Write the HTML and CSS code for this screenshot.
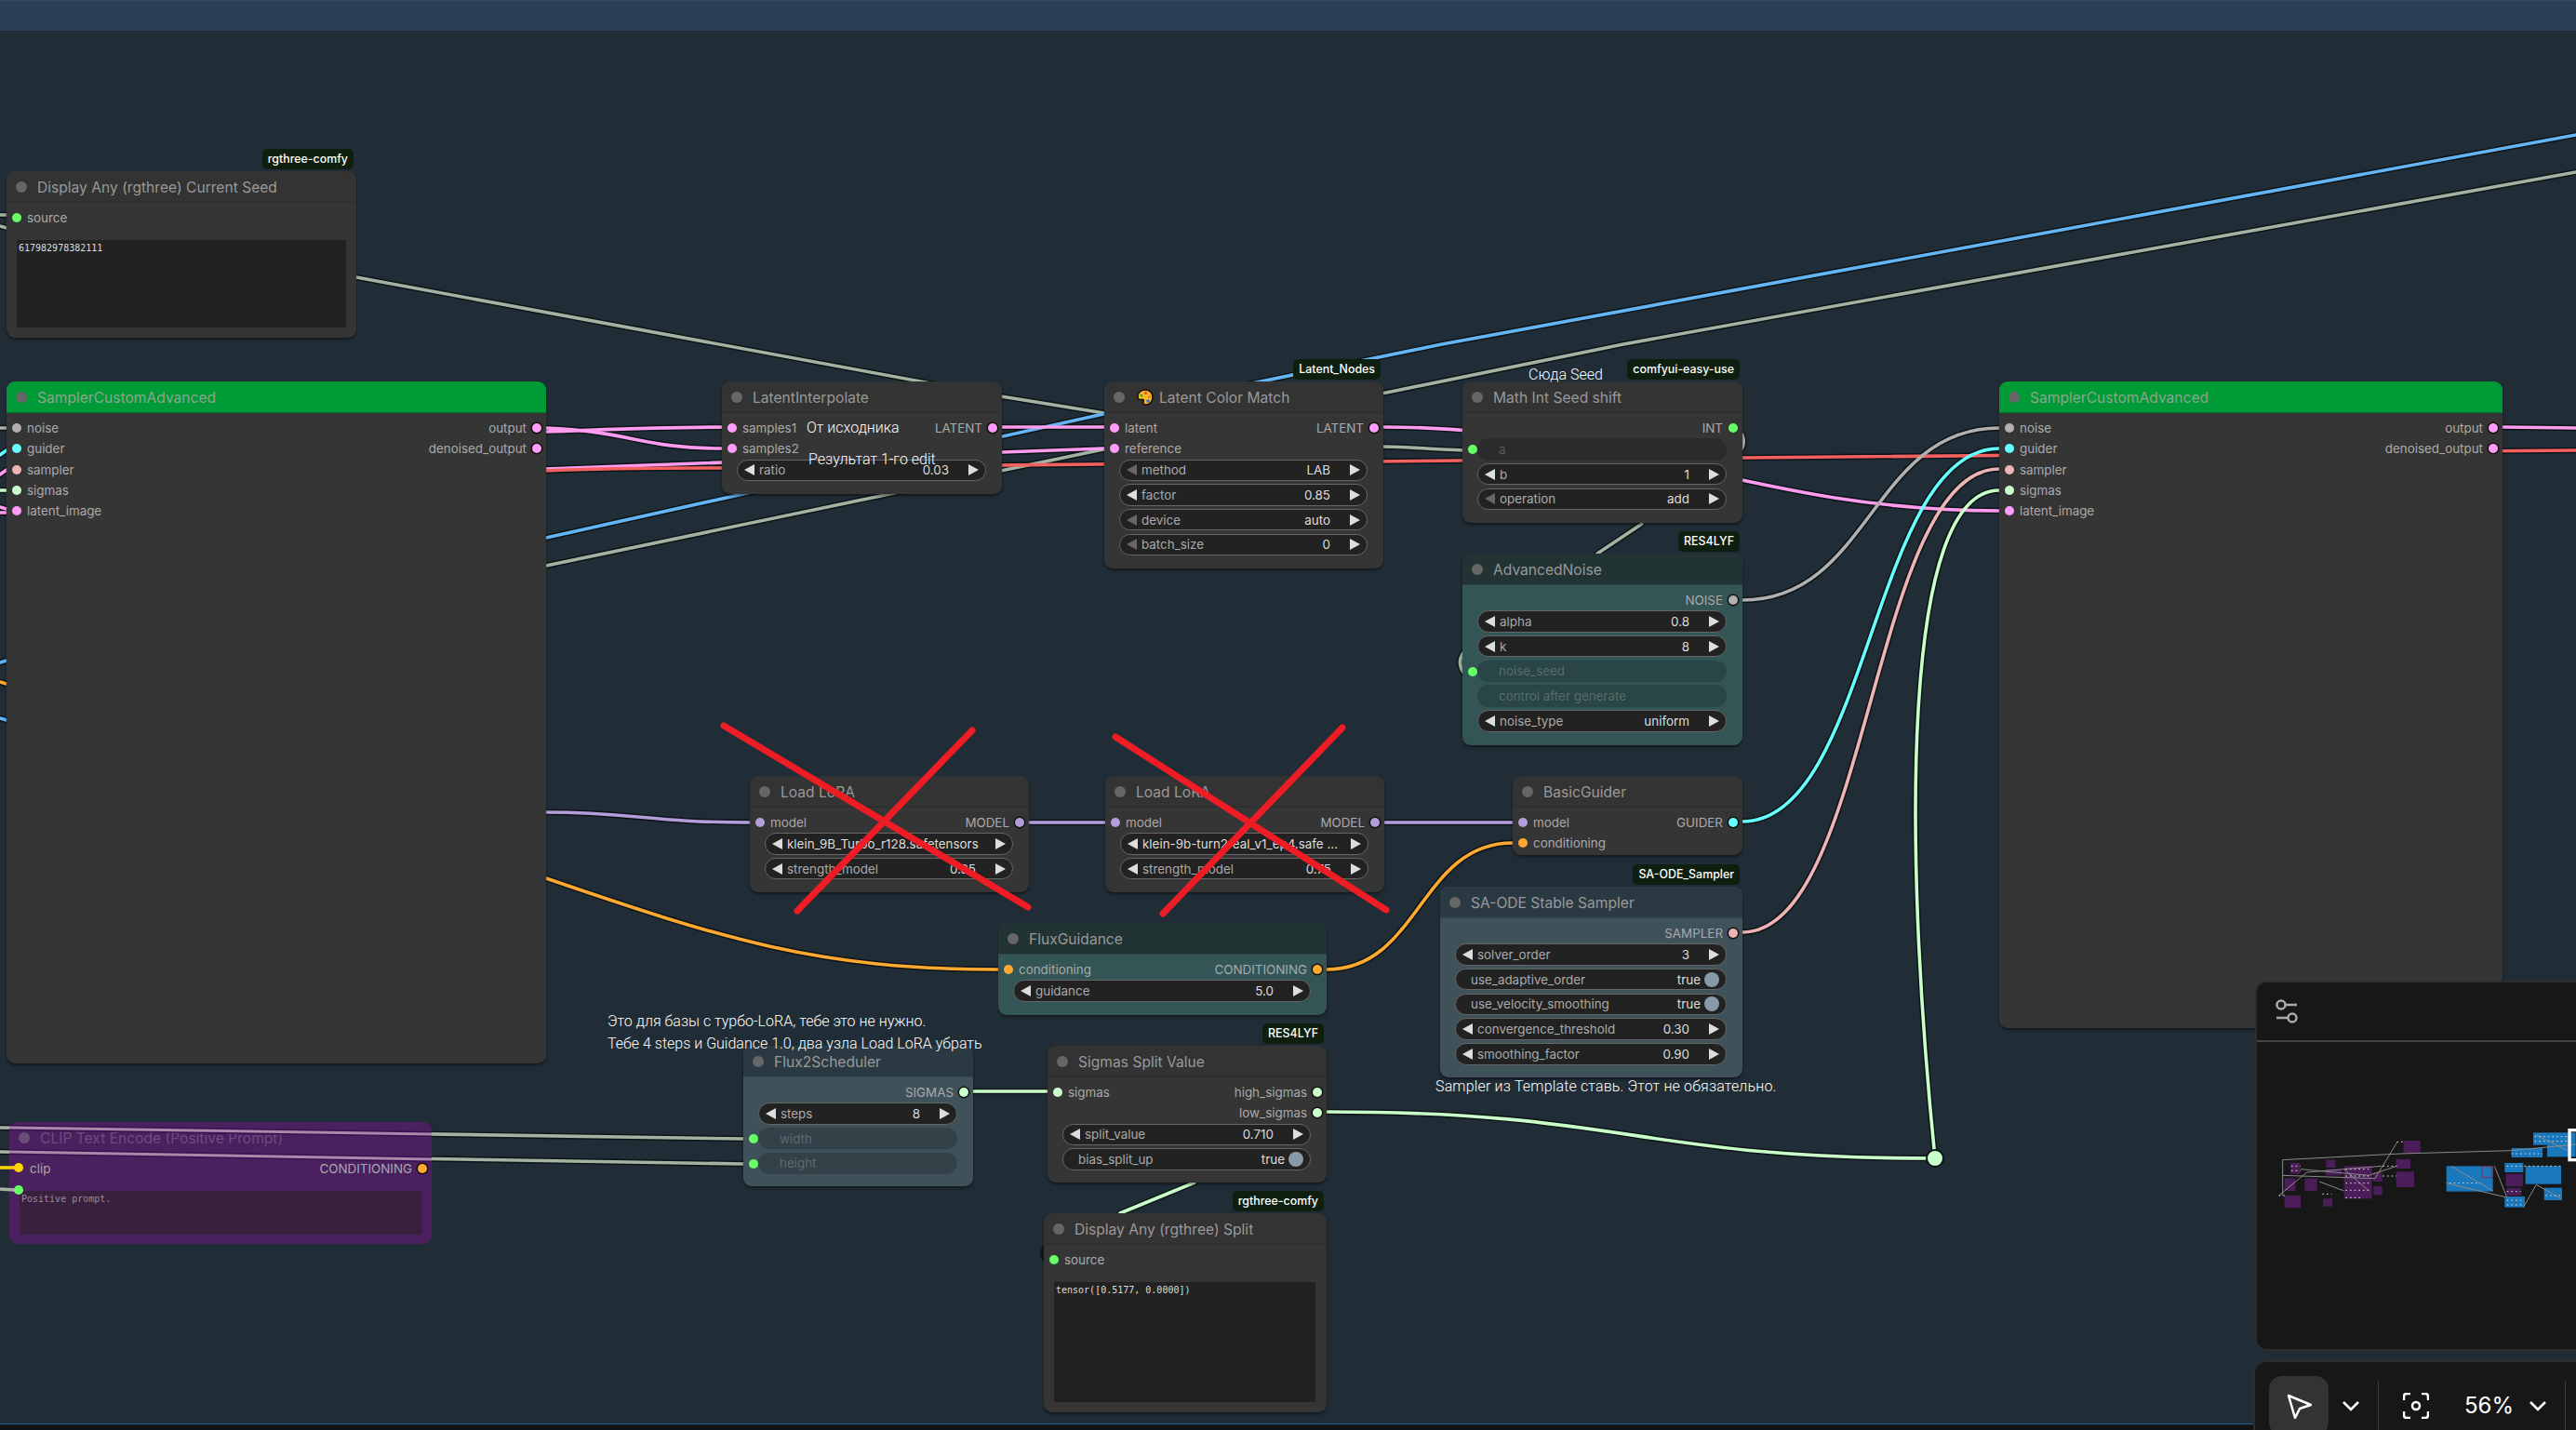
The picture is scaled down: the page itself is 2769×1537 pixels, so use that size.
FILE: index.html
```html
<!DOCTYPE html>
<html>
<head>
  <title>ComfyUI</title>
  <meta charset="UTF-8">
  <link rel="stylesheet" href="styles.css">
</head>
<body>
<div class="canvas">
  <svg class="wires" width="2769" height="1537">
    <defs>
      <g id="links">
        <path class="w-sage" d="M383 298L1076 426L1187 444"/>
        <path class="w-blue" d="M587 578L1186 445L1550 370L2769 145"/>
        <path class="w-sage" d="M587 608L1186 483L1500 420L1745 370L2769 185"/>
        <path class="w-pink" d="M587 460C680 464 690 482 776 482"/>
        <path class="w-pink" d="M587 464C650 462 700 459 787 459"/>
        <path class="w-pink" d="M587 504L1187 482"/>
        <path class="w-red" d="M587 506C650 503 700 503 776 503L1572 495L1873 492L2769 484"/>
        <path class="w-pink" d="M1076 459L1187 459"/>
        <path class="w-pink" d="M1487 459C1750 459 1886 549 2149 549"/>
        <path class="w-sage" d="M1487 480C1530 481 1550 484 1584 484"/>
        <path class="w-sage" d="M1765 563L1717 595"/>
        <path class="w-sage" d="M1868 462C1876 468 1876 478 1870 486"/>
        <path class="w-sage" d="M1574 700C1568 708 1568 716 1574 724"/>
        <path class="w-grey" d="M1873 645C2010 645 2012 460 2149 460"/>
        <path class="w-cyan" d="M1873 883C2010 883 2012 482 2149 482"/>
        <path class="w-rose" d="M1873 1002C2010 1002 2012 504 2149 504"/>
        <path class="w-mint" d="M2080 1245C2045 900 2045 527 2149 527"/>
        <path class="w-mint" d="M1426 1195C1750 1195 1760 1245 2080 1245"/>
        <path class="w-mint" d="M1046 1173L1126 1173"/>
        <path class="w-mint" d="M1284 1271L1204 1304"/>
        <path class="w-lilac" d="M587 873C680 873 700 884 806 884"/>
        <path class="w-lilac" d="M1106 884L1188 884"/>
        <path class="w-lilac" d="M1488 884L1626 884"/>
        <path class="w-orange" d="M587 944C780 1010 880 1042 1073 1042"/>
        <path class="w-orange" d="M1426 1042C1526 1042 1526 906 1626 906"/>
        <path class="w-sage" d="M0 1212L799 1224"/>
        <path class="w-sage" d="M0 1238L799 1251"/>
        <path class="w-pink" d="M2690 459L2769 460"/>
        <path class="w-sage" d="M0 231L7 231"/>
        <path class="w-sage" d="M0 243L7 245"/>
        <path class="w-grey" d="M0 460L7 460"/>
        <path class="w-cyan" d="M0 489L7 484"/>
        <path class="w-pink" d="M0 510L7 505"/>
        <path class="w-mint" d="M0 527L7 527"/>
        <path class="w-pink" d="M0 545L7 547"/>
        <path class="w-pink" d="M0 551L7 551"/>
        <path class="w-blue" d="M0 712L7 710"/>
        <path class="w-orange" d="M0 733L7 735"/>
        <path class="w-blue" d="M0 772L7 774"/>
      </g>
    </defs>
    <use href="#links" class="halo"/>
    <use href="#links" class="lines"/>
    <path class="curl" d="M1122 1340C1119 1345 1119 1350 1122 1354"/>
    <circle class="reroute" cx="2080" cy="1245" r="9"/>
  </svg>

  <div class="node n-seed">
    <div class="badge">rgthree-comfy</div>
    <div class="title"><span class="mode"></span>Display Any (rgthree) Current Seed</div>
    <div class="body">
      <div class="row"><span class="slot s-green"></span>source</div>
      <div class="text-box">617982978382111</div>
    </div>
  </div>

  <div class="node green n-sampler-a">
    <div class="title"><span class="mode"></span>SamplerCustomAdvanced</div>
    <div class="body">
      <div class="row"><span class="slot s-grey"></span>noise<span class="out">output<span class="slot s-pink linked"></span></span></div>
      <div class="row"><span class="slot s-cyan"></span>guider<span class="out">denoised_output<span class="slot s-pink linked"></span></span></div>
      <div class="row"><span class="slot s-rose"></span>sampler</div>
      <div class="row"><span class="slot s-mint"></span>sigmas</div>
      <div class="row"><span class="slot s-pink"></span>latent_image</div>
    </div>
  </div>

  <div class="node n-interp">
    <div class="title"><span class="mode"></span>LatentInterpolate</div>
    <div class="body">
      <div class="row"><span class="slot s-pink"></span>samples1<span class="out">LATENT<span class="slot s-pink linked"></span></span></div>
      <div class="row"><span class="slot s-pink"></span>samples2</div>
      <div class="widget"><i class="arrow left"></i><span class="label">ratio</span><span class="value">0.03</span><i class="arrow right"></i></div>
    </div>
  </div>

  <div class="node n-match">
    <div class="badge">Latent_Nodes</div>
    <div class="title"><span class="mode"></span>
      <svg class="palette" width="18" height="18" viewBox="0 0 18 18"><path d="M9 1C4 1 1 4.500 1 8.500C1 11 3 12 5 11.500C7 11 8 12 7 14C6.500 16 8 17 10 17C14 17 17 13 17 9C17 4.500 14 1 9 1Z" fill="#fbb81f" stroke="#111" stroke-width="1.500"/><circle cx="5" cy="7" r="1.500" fill="#3aa845"/><circle cx="9.500" cy="4.500" r="1.500" fill="#e0402f"/><circle cx="13.500" cy="8.500" r="1.500" fill="#e8742a"/><circle cx="12" cy="13" r="1.800" fill="#2a6fe0"/></svg>
      Latent Color Match</div>
    <div class="body">
      <div class="row"><span class="slot s-pink"></span>latent<span class="out">LATENT<span class="slot s-pink linked"></span></span></div>
      <div class="row"><span class="slot s-pink"></span>reference</div>
      <div class="widget"><i class="arrow left dim"></i><span class="label">method</span><span class="value">LAB</span><i class="arrow right"></i></div>
      <div class="widget"><i class="arrow left"></i><span class="label">factor</span><span class="value">0.85</span><i class="arrow right"></i></div>
      <div class="widget"><i class="arrow left dim"></i><span class="label">device</span><span class="value">auto</span><i class="arrow right"></i></div>
      <div class="widget"><i class="arrow left dim"></i><span class="label">batch_size</span><span class="value">0</span><i class="arrow right"></i></div>
    </div>
  </div>

  <div class="node n-math">
    <div class="badge">comfyui-easy-use</div>
    <div class="title"><span class="mode"></span>Math Int Seed shift</div>
    <div class="body">
      <div class="row"><span class="out">INT<span class="slot s-green"></span></span></div>
      <div class="widget off"><span class="slot s-green"></span><span class="label">a</span></div>
      <div class="widget"><i class="arrow left"></i><span class="label">b</span><span class="value">1</span><i class="arrow right"></i></div>
      <div class="widget"><i class="arrow left dim"></i><span class="label">operation</span><span class="value">add</span><i class="arrow right"></i></div>
    </div>
  </div>

  <div class="node teal n-noise">
    <div class="badge">RES4LYF</div>
    <div class="title"><span class="mode"></span>AdvancedNoise</div>
    <div class="body">
      <div class="row"><span class="out">NOISE<span class="slot s-grey linked"></span></span></div>
      <div class="widget"><i class="arrow left"></i><span class="label">alpha</span><span class="value">0.8</span><i class="arrow right"></i></div>
      <div class="widget"><i class="arrow left"></i><span class="label">k</span><span class="value">8</span><i class="arrow right"></i></div>
      <div class="widget off"><span class="slot s-green"></span><span class="label">noise_seed</span></div>
      <div class="widget off"><span class="label">control after generate</span></div>
      <div class="widget"><i class="arrow left"></i><span class="label">noise_type</span><span class="value">uniform</span><i class="arrow right"></i></div>
    </div>
  </div>

  <div class="node green n-sampler-b">
    <div class="title"><span class="mode"></span>SamplerCustomAdvanced</div>
    <div class="body">
      <div class="row"><span class="slot s-grey"></span>noise<span class="out">output<span class="slot s-pink linked"></span></span></div>
      <div class="row"><span class="slot s-cyan"></span>guider<span class="out">denoised_output<span class="slot s-pink linked"></span></span></div>
      <div class="row"><span class="slot s-rose"></span>sampler</div>
      <div class="row"><span class="slot s-mint"></span>sigmas</div>
      <div class="row"><span class="slot s-pink"></span>latent_image</div>
    </div>
  </div>

  <div class="node n-lora-a">
    <div class="title"><span class="mode"></span>Load LoRA</div>
    <div class="body">
      <div class="row"><span class="slot s-lilac"></span>model<span class="out">MODEL<span class="slot s-lilac linked"></span></span></div>
      <div class="widget"><i class="arrow left"></i><span class="label bright">klein_9B_Turbo_r128.safetensors</span><i class="arrow right"></i></div>
      <div class="widget"><i class="arrow left"></i><span class="label">strength_model</span><span class="value">0.85</span><i class="arrow right"></i></div>
    </div>
  </div>

  <div class="node n-lora-b">
    <div class="title"><span class="mode"></span>Load LoRA</div>
    <div class="body">
      <div class="row"><span class="slot s-lilac"></span>model<span class="out">MODEL<span class="slot s-lilac linked"></span></span></div>
      <div class="widget"><i class="arrow left"></i><span class="label bright">klein-9b-turn2real_v1_ep4.safe ...</span><i class="arrow right"></i></div>
      <div class="widget"><i class="arrow left"></i><span class="label">strength_model</span><span class="value">0.75</span><i class="arrow right"></i></div>
    </div>
  </div>

  <div class="node n-guider">
    <div class="title"><span class="mode"></span>BasicGuider</div>
    <div class="body">
      <div class="row"><span class="slot s-lilac"></span>model<span class="out">GUIDER<span class="slot s-cyan linked"></span></span></div>
      <div class="row"><span class="slot s-orange"></span>conditioning</div>
    </div>
  </div>

  <div class="node teal n-flux">
    <div class="title"><span class="mode"></span>FluxGuidance</div>
    <div class="body">
      <div class="row"><span class="slot s-orange"></span>conditioning<span class="out">CONDITIONING<span class="slot s-orange linked"></span></span></div>
      <div class="widget"><i class="arrow left"></i><span class="label">guidance</span><span class="value">5.0</span><i class="arrow right"></i></div>
    </div>
  </div>

  <div class="node slate n-ode">
    <div class="badge">SA-ODE_Sampler</div>
    <div class="title"><span class="mode"></span>SA-ODE Stable Sampler</div>
    <div class="body">
      <div class="row"><span class="out">SAMPLER<span class="slot s-rose linked"></span></span></div>
      <div class="widget"><i class="arrow left"></i><span class="label">solver_order</span><span class="value">3</span><i class="arrow right"></i></div>
      <div class="widget toggle"><span class="label">use_adaptive_order</span><span class="value">true</span><i class="knob"></i></div>
      <div class="widget toggle"><span class="label">use_velocity_smoothing</span><span class="value">true</span><i class="knob"></i></div>
      <div class="widget"><i class="arrow left"></i><span class="label">convergence_threshold</span><span class="value">0.30</span><i class="arrow right"></i></div>
      <div class="widget"><i class="arrow left"></i><span class="label">smoothing_factor</span><span class="value">0.90</span><i class="arrow right"></i></div>
    </div>
  </div>

  <div class="node slate n-sched">
    <div class="title"><span class="mode"></span>Flux2Scheduler</div>
    <div class="body">
      <div class="row"><span class="out">SIGMAS<span class="slot s-mint linked"></span></span></div>
      <div class="widget"><i class="arrow left"></i><span class="label">steps</span><span class="value">8</span><i class="arrow right"></i></div>
      <div class="widget off"><span class="slot s-green"></span><span class="label">width</span></div>
      <div class="widget off"><span class="slot s-green"></span><span class="label">height</span></div>
    </div>
  </div>

  <div class="node n-split">
    <div class="badge">RES4LYF</div>
    <div class="title"><span class="mode"></span>Sigmas Split Value</div>
    <div class="body">
      <div class="row"><span class="slot s-mint"></span>sigmas<span class="out">high_sigmas<span class="slot s-mint linked"></span></span></div>
      <div class="row"><span class="out">low_sigmas<span class="slot s-mint linked"></span></span></div>
      <div class="widget"><i class="arrow left"></i><span class="label">split_value</span><span class="value">0.710</span><i class="arrow right"></i></div>
      <div class="widget toggle"><span class="label">bias_split_up</span><span class="value">true</span><i class="knob"></i></div>
    </div>
  </div>

  <div class="node n-show">
    <div class="badge">rgthree-comfy</div>
    <div class="title"><span class="mode"></span>Display Any (rgthree) Split</div>
    <div class="body">
      <div class="row"><span class="slot s-green"></span>source</div>
      <div class="text-box">tensor([0.5177, 0.0000])</div>
    </div>
  </div>

  <div class="node muted n-clip">
    <div class="title"><span class="mode"></span>CLIP Text Encode (Positive Prompt)</div>
    <div class="body">
      <div class="row"><span class="slot s-yellow"></span>clip<span class="out">CONDITIONING<span class="slot s-orange linked"></span></span></div>
      <div class="text-box">Positive prompt.</div>
    </div>
  </div>

  <svg class="over" width="2769" height="1537">
    <path class="tint-halo" d="M10 1212L464 1219"/>
    <path class="tint" d="M10 1212L464 1219"/>
    <path class="tint-halo" d="M10 1238L464 1246"/>
    <path class="tint" d="M10 1238L464 1246"/>
    <path class="stub-y" d="M0 1255L16 1255"/>
    <path class="stub-g" d="M0 1278L16 1279"/>
    <circle cx="20" cy="1255" r="5" fill="#ffd500"/>
    <circle cx="20" cy="1279" r="5" fill="#66ff66"/>
    <g class="cross">
      <path d="M778 780L1105 975"/>
      <path d="M1045 785L857 979"/>
      <path d="M1199 792L1490 978"/>
      <path d="M1443 782L1250 982"/>
    </g>
  </svg>

  <div class="note note-origin">От исходника</div>
  <div class="note note-result">Результат 1-го edit</div>
  <div class="note note-seed">Сюда Seed</div>
  <div class="note note-turbo">Это для базы с турбо-LoRA, тебе это не нужно.<br>Тебе 4 steps и Guidance 1.0, два узла Load LoRA убрать</div>
  <div class="note note-template">Sampler из Template ставь. Этот не обязательно.</div>

  <div class="topbar"></div>
  <div class="bottombar"></div>

  <div class="minimap">
    <div class="map-head">
      <svg width="28" height="28" viewBox="0 0 28 28" class="ico-grey"><circle cx="8" cy="7" r="4.500"/><path d="M13 7L25 7"/><path d="M3 21L15 21"/><circle cx="20" cy="21" r="4.500"/></svg>
    </div>
    <svg class="map-view" width="345" height="332" viewBox="139 240 1035 996">
      <g class="mm-purple">
        <rect x="612" y="558" width="54" height="40"/><rect x="588" y="618" width="46" height="30"/><rect x="588" y="658" width="58" height="50"/>
        <rect x="293" y="680" width="40" height="40"/><rect x="228" y="680" width="35" height="40"/><rect x="228" y="735" width="52" height="40"/>
        <rect x="352" y="745" width="30" height="25"/><rect x="515" y="660" width="28" height="30"/><rect x="515" y="705" width="28" height="28"/>
        <rect x="362" y="620" width="30" height="25"/><rect x="362" y="650" width="50" height="20"/><rect x="420" y="640" width="90" height="105"/>
        <rect x="248" y="630" width="30" height="35"/>
      </g>
      <g class="mm-blue">
        <rect x="750" y="640" width="150" height="82"/><rect x="1030" y="532" width="137" height="40"/><rect x="960" y="582" width="100" height="30"/>
        <rect x="1005" y="640" width="115" height="58"/><rect x="938" y="630" width="60" height="30"/><rect x="938" y="738" width="65" height="35"/>
        <rect x="1065" y="710" width="58" height="40"/><rect x="1075" y="570" width="92" height="40"/>
      </g>
      <g class="mm-purple">
        <rect x="942" y="665" width="55" height="40"/><rect x="945" y="710" width="45" height="25"/>
      </g>
      <rect class="mm-red" x="865" y="642" width="33" height="35"/>
      <g class="mm-links">
        <path d="M222 620L600 600L960 590L1167 570"/><path d="M222 620L222 735"/><path d="M222 670L520 680L590 565"/>
        <path d="M210 735L300 660L540 640"/><path d="M280 650L500 670L590 640"/><path d="M340 690L420 720"/><path d="M420 650L500 720"/>
        <path d="M765 640L900 720"/><path d="M750 695L940 740"/><path d="M905 640L945 740"/><path d="M1000 770L1040 700L1120 745"/>
        <path d="M1040 540L1140 590"/>
      </g>
      <g class="mm-specks">
        <path d="M250 640L280 640M250 655L280 655M425 650L505 650M425 672L505 672M425 695L505 695M425 718L505 718M425 742L480 742"/>
        <path d="M545 640L590 640M545 672L590 672M210 735L235 735M350 730L380 730M590 562L610 562"/>
        <path d="M1035 545L1160 545M1035 560L1160 560M960 600L1060 600M945 640L1120 640M760 695L860 695M945 722L990 722M945 750L1000 750M945 765L1000 765M1070 735L1120 735"/>
      </g>
      <rect class="mm-view" x="1147" y="524" width="60" height="96"/>
    </svg>
  </div>

  <div class="toolbar">
    <div class="tool-btn">
      <svg width="27" height="27" viewBox="0 0 27 27" class="ico-white"><path d="M2 2L26 12L14 16L9 26Z"/></svg>
    </div>
    <svg class="chev" width="20" height="12" viewBox="0 0 20 12"><path d="M2 2L10 10L18 2"/></svg>
    <span class="tool-div"></span>
    <svg class="focus" width="28" height="28" viewBox="0 0 28 28"><path d="M1 8L1 4C1 2 2 1 4 1L8 1"/><path d="M20 1L24 1C26 1 27 2 27 4L27 8"/><path d="M27 20L27 24C27 26 26 27 24 27L20 27"/><path d="M8 27L4 27C2 27 1 26 1 24L1 20"/><circle cx="14" cy="14" r="4"/></svg>
    <span class="zoom-val">56%</span>
    <svg class="chev" width="20" height="12" viewBox="0 0 20 12"><path d="M2 2L10 10L18 2"/></svg>
    <span class="tool-div"></span>
  </div>
</div>
</body>
</html>
```
FILE: styles.css
```css
html,
body {
  margin: 0;
  height: 100%;
  background-color: #202d36;
  font-family: Inter, "Liberation Sans", sans-serif;
}
.canvas {
  position: relative;
  width: 2769px;
  height: 1537px;
  overflow: hidden;
  background-color: #202d36;
}
.topbar {
  position: absolute;
  left: 0;
  top: 0;
  right: 0;
  height: 33px;
  background-color: #2a4058;
  border-top: 1px solid #2f4a60;
  box-sizing: border-box;
}
.bottombar {
  position: absolute;
  left: 0;
  right: 0;
  top: 1530px;
  bottom: 0;
  background-color: #111417;
  border-top: 1px solid #2b6088;
}

/* links */
.wires,
.over {
  position: absolute;
  left: 0;
  top: 0;
}
.wires path {
  fill: none;
  stroke-linecap: round;
}
.halo {
  --dark: #0d1418;
  stroke-width: 6.5;
}
.lines {
  stroke-width: 3.6;
}
.w-sage { stroke: var(--dark, #a3b2a2); }
.w-blue { stroke: var(--dark, #64b5f6); }
.w-pink { stroke: var(--dark, #ff9cf0); }
.w-red { stroke: var(--dark, #f46060); }
.w-grey { stroke: var(--dark, #b0b0b0); }
.w-cyan { stroke: var(--dark, #66ffff); }
.w-rose { stroke: var(--dark, #ecb4b4); }
.w-mint { stroke: var(--dark, #c9ffc9); }
.w-lilac { stroke: var(--dark, #b39ddb); }
.w-orange { stroke: var(--dark, #ffa931); }
.wires .curl {
  stroke: #0d1418;
  stroke-width: 3;
}
.reroute {
  fill: #c9ffc9;
  stroke: #0d1418;
  stroke-width: 2;
}
.over {
  pointer-events: none;
}
.over path {
  fill: none;
}
.tint {
  stroke: #a888ab;
  stroke-width: 3;
}
.tint-halo {
  stroke: #3a1150;
  stroke-width: 6;
}
.stub-y {
  stroke: #ffd500;
  stroke-width: 3.500;
}
.stub-g {
  stroke: #a3b2a2;
  stroke-width: 3.500;
}
.cross path {
  stroke: #ee1c25;
  stroke-width: 7;
  stroke-linecap: round;
}

/* nodes */
.node {
  position: absolute;
  display: flex;
  flex-direction: column;
  box-sizing: border-box;
  background-color: #353535;
  border-radius: 9px;
  box-shadow: 0 2px 3px rgba(0, 0, 0, 0.45);
  color: #aaa;
  font-size: 13.400px;
}
.title {
  display: flex;
  align-items: center;
  flex: none;
  height: 34px;
  box-sizing: border-box;
  padding: 1px 0 0 10px;
  background-color: #333;
  border-bottom: 1px solid #2b2b2b;
  border-radius: 9px 9px 0 0;
  color: #999;
  font-size: 15.600px;
  white-space: nowrap;
}
.mode {
  flex: none;
  width: 12px;
  height: 12px;
  margin-right: 11px;
  border-radius: 50%;
  background-color: #666;
}
.palette {
  margin: 0 6px 0 2px;
}
.body {
  display: flex;
  flex-direction: column;
  flex: 1;
  padding-top: 5px;
  gap: 0;
}
.row {
  display: flex;
  align-items: center;
  flex: none;
  height: 22.300px;
  padding: 0 5px 0 6px;
  white-space: nowrap;
}
.row > .slot {
  margin-right: 6px;
}
.out {
  display: flex;
  align-items: center;
  margin-left: auto;
}
.out .slot {
  margin-left: 6px;
}
.slot {
  flex: none;
  width: 10px;
  height: 10px;
  border-radius: 50%;
}
.linked {
  box-shadow: 0 0 0 1.500px #111;
}
.s-green { background-color: #66ff66; }
.s-grey { background-color: #b0b0b0; }
.s-pink { background-color: #ff9cf9; }
.s-cyan { background-color: #66ffff; }
.s-rose { background-color: #ecb4b4; }
.s-mint { background-color: #ccffcc; }
.s-lilac { background-color: #b39ddb; }
.s-orange { background-color: #ffa931; }
.s-yellow { background-color: #ffd500; visibility: hidden; }

.widget {
  position: relative;
  display: flex;
  align-items: center;
  flex: none;
  height: 23.500px;
  margin: 0 17px 3.200px 16px;
  padding: 0 7px 0 7px;
  box-sizing: border-box;
  background-color: #222;
  border: 1px solid #666;
  border-radius: 12px;
  font-size: 13.400px;
  white-space: nowrap;
}
.label {
  flex: 1;
  color: #aaa;
}
.bright {
  color: #ddd;
}
.value {
  margin-right: 21px;
  color: #ddd;
}
.arrow {
  flex: none;
  width: 0;
  height: 0;
  border-top: 6px solid transparent;
  border-bottom: 6px solid transparent;
}
.arrow.left {
  margin-right: 5px;
  border-right: 11px solid #ddd;
}
.arrow.left.dim {
  border-right-color: #666;
}
.arrow.right {
  border-left: 11px solid #ddd;
}
.off {
  background-color: rgba(0, 0, 0, 0.18);
  border-color: transparent;
  padding-left: 22px;
}
.off .label {
  color: rgba(255, 255, 255, 0.22);
}
.off .slot {
  position: absolute;
  left: -11px;
  top: 6px;
}
.toggle {
  padding: 0 7px 0 16px;
}
.toggle .value {
  margin-right: 4px;
}
.knob {
  flex: none;
  width: 16px;
  height: 16px;
  border-radius: 50%;
  background-color: #89a;
}
.text-box {
  flex: none;
  margin: 13px 11px 0 11px;
  padding: 3px 2px;
  box-sizing: border-box;
  background-color: #222;
  color: #ddd;
  font-family: "DejaVu Sans Mono", monospace;
  font-size: 10px;
  line-height: 12px;
}
.badge {
  position: absolute;
  top: -24px;
  right: 3px;
  height: 22px;
  padding: 0 6px;
  border-radius: 5px;
  background-color: #0f1f0f;
  color: #fff;
  font-size: 12.400px;
  font-weight: 500;
  line-height: 22px;
  white-space: nowrap;
}

/* node colours */
.green .title {
  background-color: #009a36;
  border-bottom-color: #02762c;
  color: #8aa68e;
}
.teal {
  background-color: #335555;
}
.teal .title {
  background-color: #223333;
  border-bottom-color: #2b4444;
}
.slate {
  background-color: #3f5159;
}
.slate .title {
  background-color: #2b3a42;
  border-bottom-color: #35474f;
}
.muted {
  background-color: #4a205e;
  box-shadow: none;
}
.muted .title {
  background-color: #4a205e;
  border-bottom-color: transparent;
  color: #6c4d7e;
}
.muted .mode {
  background-color: #6a4c79;
}
.muted .text-box {
  margin-right: 10px;
  height: 47px;
  background-color: #38203e;
  color: #968aa0;
}

/* where each node sits on the graph */
.n-seed { left: 7px; top: 184px; width: 376px; height: 179px; }
.n-seed .text-box { height: 94px; }
.n-sampler-a { left: 7px; top: 410px; width: 580px; height: 733px; }
.n-interp { left: 776px; top: 410px; width: 301px; height: 121px; }
.n-match { left: 1187px; top: 410px; width: 300px; height: 201px; }
.n-math { left: 1572px; top: 410px; width: 301px; height: 152px; }
.n-noise { left: 1572px; top: 595px; width: 301px; height: 206px; }
.n-sampler-b { left: 2149px; top: 410px; width: 541px; height: 695px; }
.n-lora-a { left: 806px; top: 834px; width: 300px; height: 125px; }
.n-lora-b { left: 1188px; top: 834px; width: 300px; height: 125px; }
.n-guider { left: 1626px; top: 834px; width: 247px; height: 85px; }
.n-flux { left: 1073px; top: 992px; width: 353px; height: 99px; }
.n-ode { left: 1548px; top: 953px; width: 325px; height: 205px; }
.n-sched { left: 799px; top: 1124px; width: 247px; height: 151px; }
.n-split { left: 1126px; top: 1124px; width: 300px; height: 147px; }
.n-show { left: 1122px; top: 1304px; width: 304px; height: 214px; }
.n-show .text-box { height: 129px; margin-right: 12px; }
.n-clip { left: 10px; top: 1206px; width: 454px; height: 131px; }

/* pencilled notes */
.note {
  position: absolute;
  color: #fff;
  font-family: Roboto, sans-serif;
  font-weight: 300;
  font-size: 16px;
  line-height: 24px;
  white-space: nowrap;
}
.note-origin { left: 867px; top: 448px; }
.note-result { left: 869px; top: 482px; }
.note-seed { left: 1643px; top: 391px; }
.note-turbo { left: 653px; top: 1086px; }
.note-template { left: 1543px; top: 1156px; letter-spacing: 0.15px; }

/* minimap and zoom controls */
.minimap {
  position: absolute;
  left: 2424px;
  top: 1054px;
  width: 400px;
  height: 398px;
  box-sizing: border-box;
  background-color: #171717;
  border: 2px solid #2d2d2d;
  border-radius: 12px;
  overflow: hidden;
}
.map-head {
  display: flex;
  align-items: center;
  height: 62px;
  padding-left: 18px;
  border-bottom: 2px solid #444;
}
.map-view {
  display: block;
}
.ico-grey {
  fill: none;
  stroke: #aaa;
  stroke-width: 2.500;
}
.mm-purple { fill: #4b1e5a; }
.mm-blue { fill: #1a78bd; }
.mm-red { fill: none; stroke: #8a2a50; stroke-width: 3; }
.mm-links path { fill: none; stroke: #8a8a8a; stroke-width: 3; }
.mm-specks path { fill: none; stroke: #d8d8d8; stroke-width: 3; stroke-dasharray: 5 9; }
.mm-view { fill: none; stroke: #fff; stroke-width: 10; }
.toolbar {
  position: absolute;
  left: 2422px;
  top: 1462px;
  width: 400px;
  height: 110px;
  display: flex;
  align-items: flex-start;
  box-sizing: border-box;
  padding: 15px 0 0 15px;
  background-color: #171717;
  border: 2px solid #2d2d2d;
  border-radius: 14px;
}
.tool-btn {
  flex: none;
  display: flex;
  align-items: center;
  justify-content: center;
  width: 64px;
  height: 64px;
  border-radius: 14px;
  background-color: #333;
}
.ico-white {
  fill: none;
  stroke: #fff;
  stroke-width: 2.500;
  stroke-linejoin: round;
}
.chev {
  flex: none;
  margin: 26px 0 0 14px;
  fill: none;
  stroke: #fff;
  stroke-width: 2.500;
}
.tool-div {
  flex: none;
  width: 1px;
  height: 60px;
  margin: 5px 0 0 19px;
  background-color: #3a3a3a;
}
.focus {
  flex: none;
  margin: 18px 0 0 26px;
  fill: none;
  stroke: #fff;
  stroke-width: 2.500;
}
.zoom-val {
  flex: none;
  margin: 17px 0 0 38px;
  color: #fff;
  font-size: 24px;
  line-height: 30px;
}
.zoom-val + .chev {
  margin-left: 16px;
}
```
